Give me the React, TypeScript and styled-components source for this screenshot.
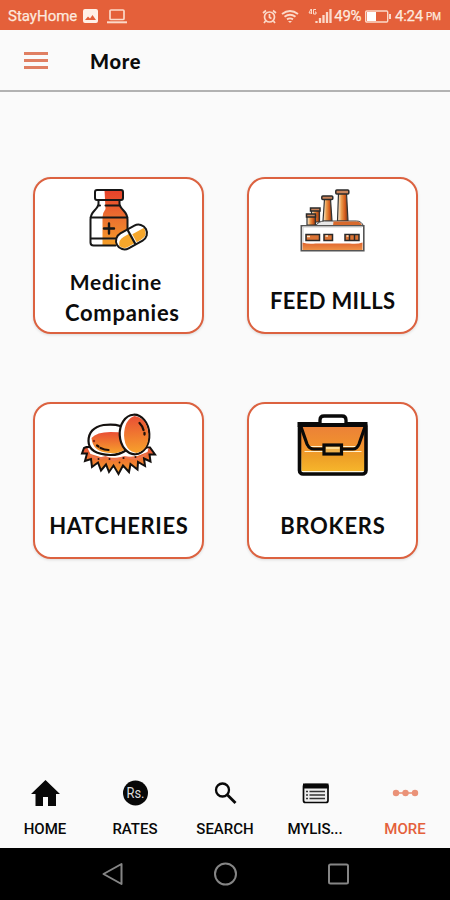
import React from "react";
import styled, { createGlobalStyle } from "styled-components";

const ACCENT = "#e4603a";

const GlobalStyle = createGlobalStyle`
  * { box-sizing: border-box; }
  body { margin: 0; background: #fafafa; }
`;

const Screen = styled.div`
  width: 450px;
  height: 900px;
  display: flex;
  flex-direction: column;
  overflow: hidden;
  background: #fafafa;
  font-family: Roboto, "Liberation Sans", sans-serif;
`;

const StatusBar = styled.div`
  height: 30px;
  flex: none;
  display: flex;
  align-items: center;
  justify-content: space-between;
  padding: 2px 9px 0 8px;
  background: #e4603a;
  color: #fde9df;
  font-size: 15px;
`;

const StatusGroup = styled.div`
  display: flex;
  align-items: center;
`;

const StatusText = styled.span<{ $size?: number; $gap?: number; $spacing?: number; $drop?: number }>`
  font-size: ${(p) => p.$size ?? 15}px;
  line-height: 18px;
  margin-left: ${(p) => p.$gap ?? 0}px;
  letter-spacing: ${(p) => p.$spacing ?? 0}px;
  padding-top: ${(p) => p.$drop ?? 0}px;
  -webkit-text-stroke: 0.25px currentColor;
`;

const StatusIcon = styled.svg<{ $gap: number }>`
  display: block;
  flex: none;
  margin-left: ${(p) => p.$gap}px;
`;

const Header = styled.header`
  height: 62px;
  flex: none;
  display: flex;
  align-items: center;
  padding-left: 24px;
  border-bottom: 2px solid #b2b2b2;
`;

const MenuButton = styled.button`
  width: 24px;
  height: 17px;
  padding: 0;
  border: 0;
  background: none;
  display: flex;
  flex-direction: column;
  justify-content: space-between;
`;

const MenuLine = styled.span`
  height: 3px;
  width: 100%;
  background: #e07f62;
`;

const Title = styled.h1`
  margin: 2px 0 0 42px;
  font: 900 20px/28px Lato, sans-serif;
  letter-spacing: 0.7px;
  color: #0c0c0c;
`;

const Grid = styled.main`
  flex: 1;
  display: grid;
  grid-template-columns: 171px 171px;
  grid-auto-rows: 157px;
  gap: 68px 43px;
  align-content: start;
  padding: 85px 0 0 33px;
`;

const Card = styled.section`
  display: flex;
  flex-direction: column;
  align-items: center;
  border: 2px solid #dc6240;
  border-radius: 18px;
  background: #fff;
  box-shadow: 0 1px 3px rgba(0, 0, 0, 0.13);
`;

const CardArt = styled.svg`
  display: block;
  flex: none;
  width: 90px;
  height: 76px;
`;

const CardLabel = styled.div<{ $top: number }>`
  display: flex;
  flex-direction: column;
  align-items: center;
  margin-top: ${(p) => p.$top}px;
  color: #0c0c0c;
`;

const LabelLine = styled.span<{ $spacing: number; $shift?: number; $size?: number }>`
  font: 700 ${(p) => p.$size ?? 22}px/31px Lato, sans-serif;
  white-space: nowrap;
  letter-spacing: ${(p) => p.$spacing}px;
  margin-right: ${(p) => -p.$spacing}px;
  padding-left: ${(p) => Math.max(p.$shift ?? 0, 0)}px;
  padding-right: ${(p) => Math.max(-(p.$shift ?? 0), 0)}px;
`;

const Tabs = styled.nav`
  flex: none;
  height: 78px;
  display: grid;
  grid-template-columns: repeat(5, 1fr);
`;

const Tab = styled.div<{ $active?: boolean }>`
  display: flex;
  flex-direction: column;
  align-items: center;
  padding-top: 6px;
  color: ${(p) => (p.$active ? ACCENT : "#080808")};
`;

const TabIcon = styled.svg`
  display: block;
  width: 34px;
  height: 34px;
`;

const TabLabel = styled.span<{ $spacing?: number }>`
  margin-top: 10px;
  font-size: 15px;
  line-height: 18px;
  font-weight: 500;
  letter-spacing: ${(p) => p.$spacing ?? 0}px;
`;

const SystemBar = styled.footer`
  flex: none;
  height: 52px;
  display: flex;
  justify-content: center;
  align-items: center;
  gap: 86px;
  background: #000;
`;

const SystemIcon = styled.svg`
  display: block;
  width: 27px;
  height: 28px;
  fill: none;
  stroke: #858585;
  stroke-width: 2;
`;

const Medicine = () => (
  <CardArt viewBox="73.5 179 90 76">
    <defs>
      <linearGradient id="bottle" x1="0" y1="0" x2="0" y2="1">
        <stop offset="0" stopColor="#e6402b" />
        <stop offset="0.5" stopColor="#ec7030" />
        <stop offset="1" stopColor="#f39a28" />
      </linearGradient>
    </defs>
    <path d="M98 191h23v9h-3v5q0 3 4 6q5 4 5 9v26H92q-2 0-2-2v-24q0-5 4-9q4-4 4-9v-2h-2v-7q0-2 2-2z" fill="#fff" />
    <path d="M104 190h16q2 0 2 2v8h-3v4q0 3 4 7t4 9v25h-25v-28q0-4 3-8z" fill="url(#bottle)" />
    <path d="M91 239.500h26v6H93q-2 0-2-2z" fill="#fff" />
    <path d="M102 239.500h14v5.500h-14z" fill="#f39a28" />
    <g fill="none" stroke="#171717" strokeWidth="2" strokeLinejoin="round" strokeLinecap="round">
      <rect x="94.500" y="190" width="28" height="10" rx="2" />
      <path d="M98 200.500v3q0 3-4 7t-4 9v23q0 3 3 3h22M119 200.500v3q0 3 4 7t4 9v11M90 217.500h37M90 238.500h26M98 205.500h1.500M105 205.500h14" />
      <path d="M108.500 223.500v10M103.500 228.500h10" strokeWidth="2.400" />
    </g>
    <g transform="rotate(-29 131 237)">
      <rect x="114.500" y="228.500" width="33" height="17" rx="8.500" fill="#fff" />
      <path d="M116 239q2-6 8-6h7v11h-8q-5 0-7-5zM133 235h13.500q0 9-8.500 9h-5z" fill="#f6a72c" />
      <rect x="114.500" y="228.500" width="33" height="17" rx="8.500" fill="none" stroke="#171717" strokeWidth="2" />
      <path d="M131 229v16" stroke="#171717" strokeWidth="2.200" />
    </g>
  </CardArt>
);

const Factory = () => (
  <CardArt viewBox="287.5 179 90 76">
    <defs>
      <linearGradient id="chimney">
        <stop offset="0" stopColor="#fff6e8" />
        <stop offset="0.38" stopColor="#e99b4c" />
        <stop offset="0.7" stopColor="#d85d1c" />
        <stop offset="1" stopColor="#6a3519" />
      </linearGradient>
      <linearGradient id="base" x1="0" y1="0" x2="0" y2="1">
        <stop offset="0" stopColor="#df642f" />
        <stop offset="1" stopColor="#ef9448" />
      </linearGradient>
    </defs>
    <g stroke="#333" strokeWidth="1.200" strokeLinejoin="round">
      <path d="M324 199h6l1.500 22h-9z" fill="url(#chimney)" />
      <path d="M338 193h8l1.500 28h-10.500z" fill="url(#chimney)" />
      <path d="M311 209h8v13h-8z" fill="url(#chimney)" />
      <path d="M306.500 215h8.500v10h-8.500z" fill="url(#chimney)" />
    </g>
    <g fill="#c8835a" stroke="#2b2b2b" strokeWidth="1.500">
      <rect x="321.300" y="196" width="11" height="3.500" rx="1" />
      <rect x="335.300" y="190" width="13" height="4" rx="1" />
      <rect x="310" y="208" width="9.500" height="3" />
      <rect x="306" y="214" width="9" height="3" />
    </g>
    <path d="M315 226q3-5 9-5h32q5 0 7 5z" fill="#e8e8e8" stroke="#444" />
    <path d="M333 221.500h23q4 0 5.500 4h-29z" fill="#d86a2d" />
    <path d="M300.800 225.800h62.500v25h-62.500z" fill="#fff" />
    <path d="M302 242.500q6 2 13 1h34q8 1 13-1v8h-60z" fill="url(#base)" />
    <path d="M300.800 225.800h62.500v25h-62.500z" fill="none" stroke="#555" strokeWidth="1.600" />
    <path d="M302.500 242v-15h59" fill="none" stroke="#ccc" />
    <g fill="#db7334" stroke="#292929" strokeWidth="1.500">
      <rect x="305.500" y="234.500" width="13.500" height="6" />
      <rect x="323.500" y="234.500" width="8.500" height="6" />
      <rect x="344.500" y="234.500" width="14" height="6" />
      <path d="M349 235v5M354 235v5" />
    </g>
    <path d="M306.500 236.500h3M325 236h2.500M346 236h2" stroke="#ffe5c7" strokeWidth="1.500" />
  </CardArt>
);

const Eggs = () => (
  <CardArt viewBox="74.5 404 90 76">
    <defs>
      <linearGradient id="egg" x1="0" y1="0" x2="0" y2="1">
        <stop offset="0" stopColor="#e94f35" />
        <stop offset="1" stopColor="#f7a12b" />
      </linearGradient>
    </defs>
    <path
      d="M87 447L84.500 448L82.500 453.500L87.500 453.500L85.500 461L91.500 459L92.500 467L98.500 462.500L101.500 470.500L106.500 464.500L109.500 472L114 465.500L119 474L123.500 465.500L129.500 472L131 464L138 469.500L138.500 462L145.500 466L144.500 458.500L151 461.500L150 454.500L155.500 454.500L150.500 447.500z"
      fill="url(#egg)" stroke="#15110f" strokeWidth="2" strokeLinejoin="miter"
    />
    <path d="M88 448l3 6 10 3q17 2 37-1l10-4 1-4-10 5-12-4-25 1z" fill="#fff" />
    <path d="M90 455l8 4 8-2 8 3 11-3 13 2 9-5" fill="none" stroke="#ed7550" strokeWidth="2" />
    <g fill="#30140b"><circle cx="99" cy="459" r="1" /><circle cx="110" cy="459" r="1" /><circle cx="124" cy="458" r="1.100" /><circle cx="136" cy="457" r="1" /><circle cx="120" cy="462.500" r=".9" /></g>
    <path d="M89 441q0-13 15-16 17-2 23 5 5 9 0 20-7 5-16 5-22-1-22-14z" fill="#fff" stroke="#15110f" strokeWidth="2.200" />
    <path d="M92 438q5-6 19-6 10 0 11 1l4 16q-6 5-16 4-17-1-18-15z" fill="url(#egg)" />
    <path d="M97.500 445.500l1.500 1M101 448q4 2 8 2" fill="none" stroke="#201009" strokeWidth="2.200" strokeLinecap="round" />
    <circle cx="94.500" cy="441" r="1.200" fill="#8e2a18" />
    <g transform="rotate(-3 135 434.500)">
      <ellipse cx="135" cy="434.500" rx="14.800" ry="19.800" fill="#fff" stroke="#15110f" strokeWidth="2.200" />
      <path d="M136 416q12.800 3 12.800 19 0 16-12.800 18-11.500-2-11.500-18 1-16 11.500-19z" fill="url(#egg)" />
    </g>
    <path d="M140 423q3 3 4 7M145 433v1.500" fill="none" stroke="#201009" strokeWidth="2.300" strokeLinecap="round" />
  </CardArt>
);

const Briefcase = () => (
  <CardArt viewBox="287.5 404 90 76">
    <defs>
      <linearGradient id="case" x1="0" y1="0" x2="0" y2="1">
        <stop offset="0" stopColor="#eb8038" />
        <stop offset="0.48" stopColor="#f1922d" />
        <stop offset="0.7" stopColor="#eea027" />
        <stop offset="1" stopColor="#f6b52b" />
      </linearGradient>
    </defs>
    <path d="M299 424h66v46q0 4-4 4h-58q-4 0-4-4z" fill="#fff7dd" />
    <path d="M300 425h65v46h-64z" fill="url(#case)" />
    <path d="M304 451.500h19M342 451.500h19M306 446.500h16M342 446.500h16" stroke="#fff0cb" strokeWidth="1" />
    <path d="M299.500 424l7 20q2 5 7 5h39q4 0 6-5l7-20" fill="none" stroke="#090909" strokeWidth="3.200" strokeLinejoin="round" />
    <rect x="299" y="424" width="66.500" height="50" rx="3.500" fill="none" stroke="#090909" strokeWidth="3.600" />
    <path d="M297 422h70v5h-70z" fill="#090909" />
    <path d="M319.500 423v-3q0-4 4-4h18q4 0 4 4v3" fill="#fff" stroke="#090909" strokeWidth="3.300" />
    <rect x="323.500" y="445" width="17.500" height="9" fill="#efb24d" stroke="#090909" strokeWidth="3.200" />
    <path d="M325.500 448h13.500" stroke="#ffe8ae" strokeWidth="1.500" />
  </CardArt>
);

export default function App() {
  return (
    <Screen>
      <GlobalStyle />
      <StatusBar>
        <StatusGroup>
          <StatusText>StayHome</StatusText>
          <StatusIcon $gap={6} width="15" height="14" viewBox="0 0 15 14">
            <path fill="#fff0e7" fillRule="evenodd" d="M2 0h11q2 0 2 2v10q0 2-2 2H2q-2 0-2-2V2q0-2 2-2zM2 11h11L9.500 6 7 9.500 5 7.500z" />
          </StatusIcon>
          <StatusIcon $gap={9} width="20" height="15" viewBox="0 0 20 15" fill="none" stroke="#fbd9c9" strokeWidth="1.700">
            <rect x="3" y="1" width="14" height="9.500" rx="1" />
            <path d="M0 13.300h20" strokeWidth="2" />
          </StatusIcon>
        </StatusGroup>
        <StatusGroup>
          <StatusIcon $gap={0} width="15" height="15" viewBox="0 0 15 15" fill="none" stroke="#fbd9c9" strokeWidth="1.700">
            <circle cx="7.500" cy="8" r="5" />
            <path d="M7.500 5v3.500l2 1M1 4l3-2.500M14 4l-3-2.500M3.500 12L2 14M11.500 12l1.500 2" />
          </StatusIcon>
          <StatusIcon $gap={4} width="18" height="15" viewBox="0 0 18 15" fill="none" stroke="#fbd9c9" strokeWidth="1.900">
            <path d="M1 5q8-6 16 0M3.500 7.700q5.500-4 11 0M6 10.400q3-2 6 0" />
            <path d="M7 12l2 2 2-2z" fill="#fbd9c9" stroke="none" />
          </StatusIcon>
          <StatusIcon $gap={9} width="24" height="16" viewBox="0 0 24 16" fill="none" stroke="#fbd9c9">
            <path d="M3 1L1 5h3M3.500 1v5M8 1.500H5.500V6H8V4H7" strokeWidth="1" />
            <path d="M8.500 15v-2M12 15v-5M15.500 15V7M19 15V4M22.500 15V1" strokeWidth="2.300" />
          </StatusIcon>
          <StatusText $gap={2} $spacing={-0.4}>49%</StatusText>
          <StatusIcon $gap={4} width="26" height="13" viewBox="0 0 26 13">
            <rect x=".7" y="1" width="22" height="11" rx="1" fill="none" stroke="#fbd9c9" strokeWidth="1.400" />
            <path d="M2 2h9v9H2z" fill="#fff" />
            <path d="M25 4v5" stroke="#fbd9c9" strokeWidth="2" />
          </StatusIcon>
          <StatusText $gap={4} $spacing={-0.25}>4:24</StatusText>
          <StatusText $gap={3} $size={10} $drop={2}>PM</StatusText>
        </StatusGroup>
      </StatusBar>
      <Header>
        <MenuButton aria-label="Menu"><MenuLine /><MenuLine /><MenuLine /></MenuButton>
        <Title>More</Title>
      </Header>
      <Grid>
        <Card>
          <Medicine />
          <CardLabel $top={11}>
            <LabelLine $size={21} $spacing={0.7} $shift={-6}>Medicine</LabelLine>
            <LabelLine $spacing={0.7} $shift={7}>Companies</LabelLine>
          </CardLabel>
        </Card>
        <Card>
          <Factory />
          <CardLabel $top={30}><LabelLine $spacing={0.35}>FEED MILLS</LabelLine></CardLabel>
        </Card>
        <Card>
          <Eggs />
          <CardLabel $top={30}><LabelLine $spacing={0.65}>HATCHERIES</LabelLine></CardLabel>
        </Card>
        <Card>
          <Briefcase />
          <CardLabel $top={30}><LabelLine $spacing={0.75}>BROKERS</LabelLine></CardLabel>
        </Card>
      </Grid>
      <Tabs>
        <Tab>
          <TabIcon viewBox="28 776 34 34"><path d="M31 794l14.500-14L60 794h-4v12h-8v-9h-5v9h-7.500v-12z" fill="currentColor" /></TabIcon>
          <TabLabel>HOME</TabLabel>
        </Tab>
        <Tab>
          <TabIcon viewBox="118 776 34 34">
            <circle cx="135.500" cy="793" r="12.500" fill="currentColor" />
            <text x="126.500" y="798.300" fill="#ddd" fontSize="15" fontFamily="Roboto, sans-serif" textLength="18" lengthAdjust="spacingAndGlyphs">Rs.</text>
          </TabIcon>
          <TabLabel>RATES</TabLabel>
        </Tab>
        <Tab>
          <TabIcon viewBox="208 776 34 34" fill="none" stroke="currentColor" strokeWidth="2.300">
            <circle cx="222.500" cy="790" r="6.500" />
            <path d="M227.500 795l8 8" strokeWidth="2.800" />
          </TabIcon>
          <TabLabel>SEARCH</TabLabel>
        </Tab>
        <Tab>
          <TabIcon viewBox="298 776 34 34">
            <rect x="303.500" y="784.500" width="24.500" height="18" rx="2" fill="#eee" stroke="currentColor" strokeWidth="1.700" />
            <path d="M303 783.500h25.500v5H303z" fill="currentColor" />
            <path d="M309.500 791.500H325M309.500 795H325M309.500 798.500H325" stroke="#333" strokeWidth="1.500" />
            <path d="M306 791.500h2M306 795h2M306 798.500h2" stroke="#333" strokeWidth="1.500" />
          </TabIcon>
          <TabLabel $spacing={-0.15}>MYLIS...</TabLabel>
        </Tab>
        <Tab $active>
          <TabIcon viewBox="388 776 34 34" fill="#ea9278">
            <path d="M396 792.200h19v1.600h-19z" />
            <circle cx="396" cy="793" r="3.200" /><circle cx="405.500" cy="793" r="3.200" /><circle cx="415" cy="793" r="3.200" />
          </TabIcon>
          <TabLabel>MORE</TabLabel>
        </Tab>
      </Tabs>
      <SystemBar>
        <SystemIcon viewBox="0 0 27 28"><path d="M4.500 14L22.500 4v20z" strokeLinejoin="round" /></SystemIcon>
        <SystemIcon viewBox="0 0 27 28"><circle cx="13.500" cy="14" r="10.500" /></SystemIcon>
        <SystemIcon viewBox="0 0 27 28"><rect x="4" y="4.500" width="19" height="19" rx="1.500" /></SystemIcon>
      </SystemBar>
    </Screen>
  );
}
